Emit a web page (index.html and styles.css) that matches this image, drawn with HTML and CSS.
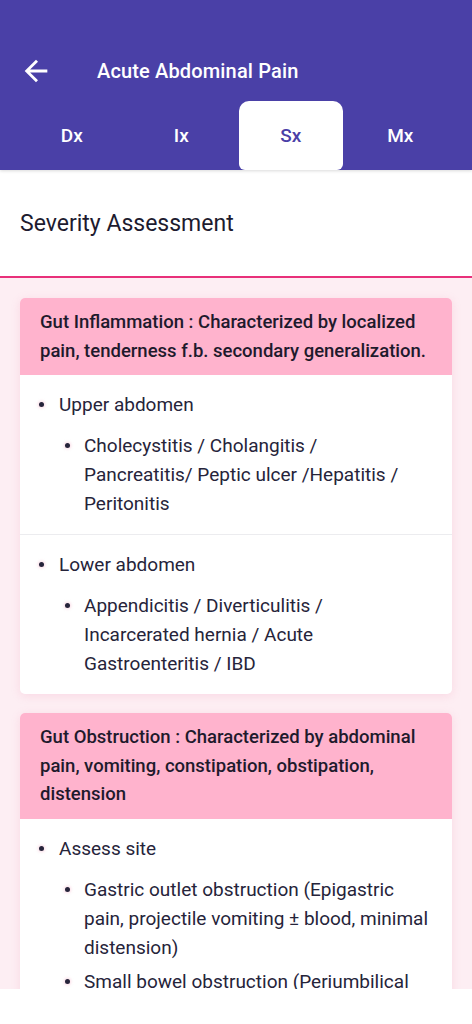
FILE: index.html
```html
<!DOCTYPE html>
<html>
<head>
<meta charset="utf-8">
<link rel="stylesheet" href="styles.css">
</head>
<body>
<div class="app">
  <header class="header">
    <div class="toolbar">
      <svg class="back" viewBox="0 0 24 24" width="34" height="34"><path fill="#fff" d="M20 11H7.83l5.59-5.59L12 4l-8 8 8 8 1.41-1.41L7.83 13H20v-2z"/></svg>
      <div class="title">Acute Abdominal Pain</div>
    </div>
    <nav class="tabs">
      <div class="tab">Dx</div>
      <div class="tab">Ix</div>
      <div class="tab active">Sx</div>
      <div class="tab">Mx</div>
    </nav>
  </header>
  <section class="section-title">Severity Assessment</section>
  <main class="content">
    <div class="card">
      <div class="card-head">Gut Inflammation : Characterized by localized pain, tenderness f.b. secondary generalization.</div>
      <div class="group">
        <div class="item"><span class="dot"></span><span>Upper abdomen</span></div>
        <div class="sub">
          <div class="item"><span class="dot"></span><span>Cholecystitis / Cholangitis / Pancreatitis/ Peptic ulcer /Hepatitis / Peritonitis</span></div>
        </div>
      </div>
      <div class="group">
        <div class="item"><span class="dot"></span><span>Lower abdomen</span></div>
        <div class="sub">
          <div class="item"><span class="dot"></span><span>Appendicitis / Diverticulitis / Incarcerated hernia / Acute Gastroenteritis / IBD</span></div>
        </div>
      </div>
    </div>
    <div class="card">
      <div class="card-head">Gut Obstruction : Characterized by abdominal pain, vomiting, constipation, obstipation, distension</div>
      <div class="group">
        <div class="item"><span class="dot"></span><span>Assess site</span></div>
        <div class="sub">
          <div class="item"><span class="dot"></span><span>Gastric outlet obstruction (Epigastric pain, projectile vomiting ± blood, minimal distension)</span></div>
          <div class="item"><span class="dot"></span><span>Small bowel obstruction (Periumbilical pain, bilious vomiting, moderate distension)</span></div>
          <div class="item"><span class="dot"></span><span>Large bowel obstruction (Lower abdominal pain, feculent vomiting, marked distension)</span></div>
        </div>
      </div>
    </div>
  </main>
</div>
</body>
</html>
```
FILE: styles.css
```css
* { box-sizing: border-box; }
html, body { margin: 0; padding: 0; background: #ffffff; }
body { font-family: Roboto, "Noto Sans", sans-serif; width: 472px; height: 1024px; overflow: hidden; }
.app { height: 989px; overflow: hidden; display: flex; flex-direction: column; background: #fdeef3; }
.header { background: #4a40a7; padding-top: 50px; flex: none; position: relative; z-index: 2; box-shadow: 0 1px 3px rgba(0,0,0,0.15); }
.toolbar { height: 42px; display: flex; align-items: center; padding-left: 19px; }
.back { display: block; flex: none; }
.title { color: #fff; font-size: 20px; font-weight: 500; margin-left: 44px; letter-spacing: 0.15px; }
.tabs { display: flex; padding: 0 17px; margin-top: 9px; height: 69px; }
.tab { flex: 1; margin: 0 3px; display: flex; align-items: center; justify-content: center; color: #fff; font-size: 19px; font-weight: 500; border-radius: 10px 10px 6px 6px; }
.tab.active { background: #fff; color: #4a40a7; }
.section-title { background: #fff; height: 108px; display: flex; align-items: center; padding-left: 20px; font-size: 23px; color: #1d1b2f; border-bottom: 2px solid #e8307a; flex: none; }
.content { padding: 20px 20px 0; }
.card { background: #fff; border-radius: 5px; box-shadow: 0 2px 10px rgba(233, 120, 160, 0.18); margin-bottom: 19px; overflow: hidden; }
.card-head { background: #ffb3cd; padding: 10px 20px 10px 20px; font-size: 18.5px; font-weight: 500; line-height: 28.5px; color: #1e1a2c; }
.group { padding: 15px 22px 16px 18px; border-top: 1px solid #ececef; }
.card-head + .group { border-top: none; }
.item { display: flex; font-size: 19px; line-height: 29px; color: #26243a; }
.dot { flex: none; width: 5px; height: 5px; border-radius: 50%; background: #26243a; margin-top: 12px; margin-left: 1px; margin-right: 15px; box-shadow: 0 0 3px 1px rgba(240, 150, 180, 0.35); }
.sub { padding-left: 26px; margin-top: 12px; display: flex; flex-direction: column; gap: 5px; }
.sub .dot { margin-right: 14px; }
```
